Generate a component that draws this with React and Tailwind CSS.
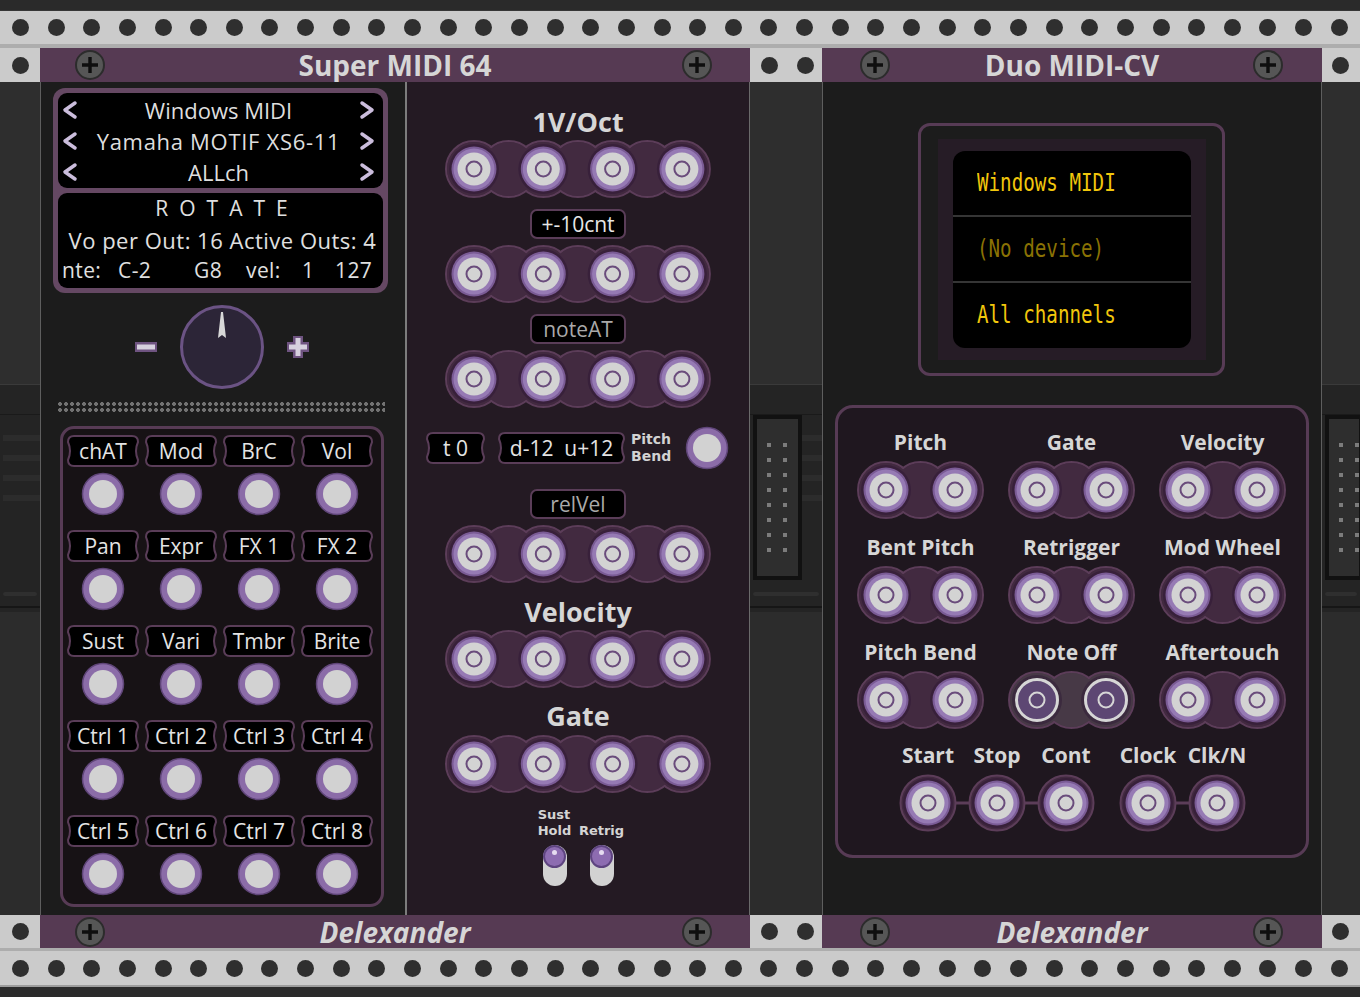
import React from "react";

const BLOB = "#422a40";
const EDGE = "#5c3d59";

function Dot() {
  return <div className="w-[17px] h-[17px] rounded-full bg-[#2f2f2f] shrink-0" />;
}

function Rail({ h }) {
  return (
    <div className={`${h} bg-[#cbcbcb] flex items-center justify-between px-[12px]`}>
      {Array.from({ length: 38 }).map((_, i) => (
        <Dot key={i} />
      ))}
    </div>
  );
}

function Screw() {
  return (
    <div className="w-[30px] h-[30px] rounded-full bg-[#565656] border-2 border-[#2c2c2c] flex items-center justify-center">
      <svg width="18" height="18" viewBox="0 0 18 18">
        <path d="M9 1v16M1 9h16" stroke="#0e0e0e" strokeWidth="3.4" />
      </svg>
    </div>
  );
}

function Bar({ title, italic, left, right, h }) {
  return (
    <div className={`${h} bg-[#563a53] grid grid-cols-[1fr_auto_1fr] items-center`}>
      <div className={`flex ${left}`}>
        <Screw />
      </div>
      <div className={`text-[28px] leading-none font-bold text-[#d6d6d6] ${italic ? "italic" : ""}`}>{title}</div>
      <div className={`flex justify-end ${right}`}>
        <Screw />
      </div>
    </div>
  );
}

function Jack({ x, y, out }) {
  if (out) {
    return (
      <g>
        <circle cx={x} cy={y} r={25} fill="#3b2a3e" />
        <circle cx={x} cy={y} r={20.5} fill="#5d4773" stroke="#d6d6d6" strokeWidth={3} />
        <circle cx={x} cy={y} r={7.5} fill="none" stroke="#d6d6d6" strokeWidth={2} />
      </g>
    );
  }
  return (
    <g>
      <circle cx={x} cy={y} r={25} fill="#38203a" />
      <circle cx={x} cy={y} r={22.5} fill="#7a5b95" />
      <circle cx={x} cy={y} r={20.5} fill="#967ab4" />
      <circle cx={x} cy={y} r={16.5} fill="#d3d3d3" />
      <circle cx={x} cy={y} r={7.5} fill="none" stroke="#6a4c7c" strokeWidth={2} />
    </g>
  );
}

function JackRow({ n, gap, out }) {
  const xs = Array.from({ length: n }, (_, i) => 29 + i * gap);
  const mids = xs.slice(1).map((x, i) => (x + xs[i]) / 2);
  const all = [...xs, ...mids];
  const w = 58 + (n - 1) * gap;
  const fill = out ? "#473946" : BLOB;
  return (
    <svg width={w} height={58} viewBox={`0 0 ${w} 58`} className="block shrink-0">
      {all.map((x, i) => (
        <circle key={"e" + i} cx={x} cy={29} r={28} fill={fill} stroke={EDGE} strokeWidth={2} />
      ))}
      {all.map((x, i) => (
        <circle key={"f" + i} cx={x} cy={29} r={27} fill={fill} />
      ))}
      {xs.map((x, i) => (
        <Jack key={i} x={x} y={29} out={out} />
      ))}
    </svg>
  );
}

function ChainRow({ n }) {
  const xs = Array.from({ length: n }, (_, i) => 29 + i * 69);
  const w = 58 + (n - 1) * 69;
  return (
    <svg width={w} height={58} viewBox={`0 0 ${w} 58`} className="block shrink-0">
      <line x1={29} y1={29} x2={xs[n - 1]} y2={29} stroke={EDGE} strokeWidth={3} />
      {xs.map((x, i) => (
        <circle key={"c" + i} cx={x} cy={29} r={27.5} fill={BLOB} stroke={EDGE} strokeWidth={2} />
      ))}
      {xs.map((x, i) => (
        <Jack key={i} x={x} y={29} />
      ))}
    </svg>
  );
}

function SimpleJack() {
  return (
    <svg width="44" height="44" viewBox="0 0 44 44" className="block shrink-0">
      <circle cx="22" cy="22" r="20.5" fill="#8b6ca8" stroke="#5f4578" strokeWidth="1.5" />
      <circle cx="22" cy="22" r="14" fill="#d2d2d2" />
    </svg>
  );
}

function WavyTag({ w, h, className, children }) {
  const d = `M7 1H${w - 7}Q${w - 1} 1 ${w - 1} 7Q${w - 5} ${h / 2} ${w - 1} ${h - 7}Q${w - 1} ${h - 1} ${w - 7} ${h - 1}H7Q1 ${h - 1} 1 ${h - 7}Q5 ${h / 2} 1 7Q1 1 7 1Z`;
  return (
    <div className={`relative flex items-center justify-center shrink-0 ${className}`}>
      <svg className="absolute inset-0" width={w} height={h} viewBox={`0 0 ${w} ${h}`}>
        <path d={d} fill="#000" stroke="#5a3d58" strokeWidth="2" />
      </svg>
      <span className="relative text-[21px] leading-none text-[#e4e4e4] whitespace-pre">{children}</span>
    </div>
  );
}

function BoxTag({ children, dim }) {
  return (
    <div className="w-[96px] h-[30px] rounded-[7px] bg-black border-2 border-[#5a3d58] flex items-center justify-center">
      <span className={`text-[21px] leading-none ${dim ? "text-[#a9a9a9]" : "text-[#e6e6e6]"}`}>{children}</span>
    </div>
  );
}

function Chevron({ right }) {
  return (
    <svg width="16" height="20" viewBox="0 0 16 20" className="shrink-0">
      <polyline
        points={right ? "3,3 13,10 3,17" : "13,3 3,10 13,17"}
        fill="none"
        stroke="#cbbddc"
        strokeWidth="3.5"
        strokeLinecap="round"
        strokeLinejoin="round"
      />
    </svg>
  );
}

function Connector() {
  return (
    <div className="w-[49px] h-[165px] bg-[#111] p-[4px]">
      <div className="w-full h-full bg-[#2e2e2e] grid grid-cols-[repeat(2,4px)] gap-x-[12px] gap-y-[11px] pl-[10px] pt-[24px] content-start">
        {Array.from({ length: 16 }).map((_, i) => (
          <div key={i} className="w-[4px] h-[4px] bg-[#7c7c7c]" />
        ))}
      </div>
    </div>
  );
}

function Gap({ w, dots, pad, connector }) {
  const dotRow = (h) => (
    <div className={`${h} bg-[#cbcbcb] flex items-center gap-[19px] ${pad}`}>
      {Array.from({ length: dots }).map((_, i) => (
        <Dot key={i} />
      ))}
    </div>
  );
  return (
    <div className={`${w} shrink-0 flex flex-col overflow-hidden`}>
      {dotRow("h-[34px]")}
      <div className="h-[303px] bg-[#2e2e2e] border-b border-[#3a3a3a]" />
      <div className="h-[227px] bg-[#242424] flex flex-col">
        <div className="h-[30px] border-b border-[#1a1a1a]" />
        <div className="flex items-start pl-[3px]">
          {connector ? <Connector /> : <div className="h-[165px]" />}
          <div className="flex-1 flex flex-col gap-[14px] pt-[20px]">
            <div className="h-[6px] bg-[#2c2c2c]" />
            <div className="h-[6px] bg-[#2c2c2c]" />
            <div className="h-[6px] bg-[#2c2c2c]" />
            <div className="h-[6px] bg-[#2c2c2c]" />
          </div>
        </div>
        <div className="mt-[12px] mx-[3px] h-[4px] rounded-full bg-[#2f2f2f]" />
        <div className="mt-[10px] h-[2px] bg-[#161616]" />
      </div>
      <div className="flex-1 bg-[#2c2c2c]" />
      {dotRow("h-[33px]")}
    </div>
  );
}

const LEFT_LABELS = [
  ["chAT", "Mod", "BrC", "Vol"],
  ["Pan", "Expr", "FX 1", "FX 2"],
  ["Sust", "Vari", "Tmbr", "Brite"],
  ["Ctrl 1", "Ctrl 2", "Ctrl 3", "Ctrl 4"],
  ["Ctrl 5", "Ctrl 6", "Ctrl 7", "Ctrl 8"],
];

const MIDI_ROWS = [
  ["Windows MIDI", ""],
  ["Yamaha MOTIF XS6-11", "tracking-[0.7px]"],
  ["ALLch", ""],
];

function SuperMidi() {
  return (
    <div className="w-[710px] shrink-0 flex flex-col">
      <Bar title="Super MIDI 64" left="pl-[35px]" right="pr-[38px]" h="h-[34px]" />
      <div className="h-[833px] flex border-l border-[#5e5e5e]">
        {/* left column */}
        <div className="w-[364px] bg-[#1c1c1c] flex flex-col">
          <div className="mt-[6px] ml-[12px] w-[335px] h-[205px] rounded-[12px] bg-[#654863] p-[5px] flex flex-col gap-[5px]">
            <div className="h-[95px] rounded-[9px] bg-black pt-[1px] flex flex-col">
              {MIDI_ROWS.map(([t, tr]) => (
                <div key={t} className="h-[31px] flex items-center pl-[4px] pr-[8px]">
                  <Chevron />
                  <div className={`flex-1 text-center text-[22px] leading-none text-[#dedede] whitespace-nowrap ${tr}`}>{t}</div>
                  <Chevron right />
                </div>
              ))}
            </div>
            <div className="h-[95px] rounded-[9px] bg-black flex flex-col text-[#e0e0e0] text-[21px] leading-none">
              <div className="h-[31px] flex items-center justify-center pl-[13px] tracking-[11px]">ROTATE</div>
              <div className="h-[31px] flex items-center justify-center pl-[4px] whitespace-nowrap text-[22px] tracking-[0.5px]">
                Vo per Out: 16 Active Outs: 4
              </div>
              <div className="h-[31px] grid grid-cols-[56px_76px_52px_56px_33px_1fr] items-center pl-[4px] whitespace-nowrap tracking-[0.4px]">
                <span>nte:</span>
                <span>C-2</span>
                <span>G8</span>
                <span>vel:</span>
                <span>1</span>
                <span>127</span>
              </div>
            </div>
          </div>

          <div className="mt-[12px] ml-[92px] h-[84px] flex items-center">
            <svg width="26" height="12" viewBox="0 0 26 12">
              <path d="M2 6h22" stroke="#6e5380" strokeWidth="10" />
              <path d="M4 6h18" stroke="#d6d0de" strokeWidth="5" />
            </svg>
            <div className="ml-[21px] w-[84px] h-[84px] rounded-full bg-[#2c2537] border-[3px] border-[#6b5384] flex justify-center">
              <svg width="20" height="40" viewBox="0 0 20 40">
                <polygon points="9,4 11,4 14,30 10,27 6,30" fill="#d8d8d8" />
              </svg>
            </div>
            <svg width="26" height="26" viewBox="0 0 26 26" className="ml-[21px]">
              <path d="M13 2v22M2 13h22" stroke="#6e5380" strokeWidth="10" />
              <path d="M13 4v18M4 13h18" stroke="#d6d0de" strokeWidth="5" />
            </svg>
          </div>

          <div className="mt-[12px] ml-[16px] w-[328px] h-[12px] bg-[radial-gradient(circle,#727272_1.6px,transparent_2.2px)] bg-[length:6px_6px]" />

          <div className="mt-[13px] ml-[19px] w-[324px] h-[481px] border-[3px] border-[#573b55] rounded-[14px] bg-[#171215] pt-[6px] pl-[1px] grid grid-cols-[repeat(4,78px)] content-start">
            {LEFT_LABELS.flat().map((t) => (
              <div key={t} className="h-[95px] flex flex-col items-center">
                <WavyTag w={72} h={32} className="w-[72px] h-[32px]">
                  {t}
                </WavyTag>
                <div className="mt-[5px]">
                  <SimpleJack />
                </div>
              </div>
            ))}
          </div>
        </div>

        {/* right column */}
        <div className="flex-1 bg-[#241a23] border-l-2 border-[#7c7c7c] border-r border-r-[#6a6a6a] flex flex-col items-center">
          <div className="mt-[25px] h-[30px] text-[27px] leading-[30px] font-bold text-[#d6d6d6]">1V/Oct</div>
          <div className="mt-[3px]">
            <JackRow n={4} gap={69.3} />
          </div>
          <div className="mt-[11px]">
            <BoxTag>+-10cnt</BoxTag>
          </div>
          <div className="mt-[6px]">
            <JackRow n={4} gap={69.3} />
          </div>
          <div className="mt-[11px]">
            <BoxTag dim>noteAT</BoxTag>
          </div>
          <div className="mt-[6px]">
            <JackRow n={4} gap={69.3} />
          </div>
          <div className="mt-[18px] h-[44px] self-stretch flex items-center pl-[19px]">
            <WavyTag w={59} h={32} className="w-[59px] h-[32px]">
              t 0
            </WavyTag>
            <WavyTag w={127} h={32} className="ml-[13px] w-[127px] h-[32px]">
              {"d-12  u+12"}
            </WavyTag>
            <div className="ml-[6px] w-[44px] flex flex-col font-['DejaVu_Sans',sans-serif] text-[14px] leading-[17px] font-bold text-[#d2d2d2]">
              <span>Pitch</span>
              <span>Bend</span>
            </div>
            <div className="ml-[10px]">
              <SimpleJack />
            </div>
          </div>
          <div className="mt-[19px]">
            <BoxTag dim>relVel</BoxTag>
          </div>
          <div className="mt-[6px]">
            <JackRow n={4} gap={69.3} />
          </div>
          <div className="mt-[14px] h-[30px] text-[27px] leading-[30px] font-bold text-[#d6d6d6]">Velocity</div>
          <div className="mt-[3px]">
            <JackRow n={4} gap={69.3} />
          </div>
          <div className="mt-[13px] h-[30px] text-[27px] leading-[30px] font-bold text-[#d6d6d6]">Gate</div>
          <div className="mt-[4px]">
            <JackRow n={4} gap={69.3} />
          </div>
          <div className="mt-[12px] flex gap-[3px]">
            {[["Sust", "Hold"], ["Retrig"]].map((lines) => (
              <div key={lines.join()} className="w-[44px] flex flex-col items-center">
                <div className="h-[34px] flex flex-col justify-end font-['DejaVu_Sans',sans-serif] text-[13px] leading-[16px] font-bold text-[#d4d4d4]">
                  {lines.map((l) => (
                    <span key={l}>{l}</span>
                  ))}
                </div>
                <div className="mt-[6px] w-[24px] h-[41px] rounded-full bg-[#d2d2d2] flex justify-center">
                  <div className="w-[23px] h-[23px] rounded-full bg-[#8d6cb1] border-2 border-[#5e4480] flex justify-center pt-[3px]">
                    <div className="w-[5px] h-[5px] rounded-full bg-[#e6dcf0]" />
                  </div>
                </div>
              </div>
            ))}
          </div>
        </div>
      </div>
      <Bar title="Delexander" italic left="pl-[35px]" right="pr-[38px]" h="h-[33px]" />
    </div>
  );
}

const PAIRS = [
  ["Pitch", "Gate", "Velocity"],
  ["Bent Pitch", "Retrigger", "Mod Wheel"],
  ["Pitch Bend", "Note Off", "Aftertouch"],
];

function Label({ children }) {
  return (
    <div className="h-[28px] flex items-center justify-center whitespace-nowrap text-[21px] leading-none font-bold text-[#d6d6d6]">
      {children}
    </div>
  );
}

function MonoLine({ children, color }) {
  return (
    <div className="h-[64px] flex items-center pl-[24px] overflow-hidden">
      <span className={`origin-left scale-x-[0.8] whitespace-nowrap text-[24px] leading-none ${color}`}>{children}</span>
    </div>
  );
}

function DuoMidi() {
  return (
    <div className="w-[500px] shrink-0 flex flex-col">
      <Bar title="Duo MIDI-CV" left="pl-[38px]" right="pr-[39px]" h="h-[34px]" />
      <div className="h-[833px] bg-[#1c1c1c] border-x border-[#5e5e5e] flex flex-col">
        <div className="mt-[41px] ml-[95px] w-[307px] h-[253px] border-[3px] border-[#573b55] rounded-[12px] pt-[13px] pl-[17px]">
          <div className="w-[268px] h-[221px] bg-[#261c26] pt-[12px] pl-[15px]">
            <div className="w-[238px] h-[197px] rounded-[12px] bg-black flex flex-col font-['DejaVu_Sans_Mono',monospace]">
              <MonoLine color="text-[#f2c70c]">Windows MIDI</MonoLine>
              <div className="h-[2px] bg-[#353535]" />
              <MonoLine color="text-[#8a7204]">(No device)</MonoLine>
              <div className="h-[2px] bg-[#353535]" />
              <MonoLine color="text-[#f2c70c]">All channels</MonoLine>
            </div>
          </div>
        </div>

        <div className="mt-[29px] ml-[12px] w-[474px] h-[453px] border-[3px] border-[#573b55] rounded-[18px] bg-[#1f171f] pt-[20px]">
          <div className="grid grid-cols-[repeat(3,151px)] pl-[7px] gap-y-[14px]">
            {PAIRS.flat().map((t) => (
              <div key={t} className="flex flex-col items-center">
                <Label>{t}</Label>
                <div className="mt-[5px]">
                  <JackRow n={2} gap={69} out={t === "Note Off"} />
                </div>
              </div>
            ))}
          </div>
          <div className="mt-[12px] flex pl-[61px] gap-[24px]">
            {[["Start", "Stop", "Cont"], ["Clock", "Clk/N"]].map((g) => (
              <div key={g[0]} className="flex flex-col">
                <div className="flex gap-[11px]">
                  {g.map((l) => (
                    <div key={l} className="w-[58px] flex justify-center">
                      <Label>{l}</Label>
                    </div>
                  ))}
                </div>
                <div className="mt-[5px]">
                  <ChainRow n={g.length} />
                </div>
              </div>
            ))}
          </div>
        </div>
      </div>
      <Bar title="Delexander" italic left="pl-[38px]" right="pr-[39px]" h="h-[33px]" />
    </div>
  );
}

export default function App() {
  return (
    <div className="w-[1360px] h-[997px] bg-[#2b2b2b] overflow-hidden flex flex-col font-['Open_Sans',sans-serif]">
      <div className="h-[11px] bg-[#2a2a2a] border-b border-[#363636]" />
      <Rail h="h-[33px]" />
      <div className="h-[4px] bg-[#adadad]" />
      <div className="h-[900px] flex">
        <Gap w="w-[40px]" dots={1} pad="pl-[12px]" />
        <SuperMidi />
        <Gap w="w-[72px]" dots={2} pad="pl-[11px]" connector />
        <DuoMidi />
        <Gap w="w-[38px]" dots={1} pad="pl-[10px]" connector />
      </div>
      <div className="h-[3px] bg-[#adadad]" />
      <Rail h="h-[34px]" />
      <div className="h-[2px] bg-[#9c9c9c]" />
      <div className="flex-1 bg-[#2b2b2b]" />
    </div>
  );
}
